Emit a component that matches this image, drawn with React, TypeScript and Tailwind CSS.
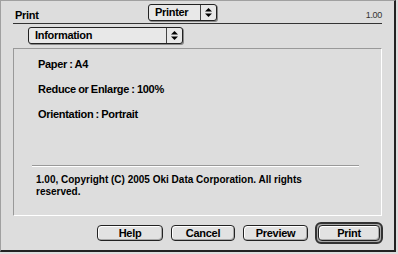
import React from "react";

const font = { fontFamily: '"Liberation Sans", Arial, sans-serif' };

function Arrows() {
  return (
    <svg width="7" height="9" viewBox="0 0 7 9" className="block">
      <path d="M3.5 0 L7 3.5 L0 3.5 Z" fill="#000" />
      <path d="M0 5.5 L7 5.5 L3.5 9 Z" fill="#000" />
    </svg>
  );
}

function Popup({ label, width }: { label: string; width: string }) {
  return (
    <div className={`flex h-[17px] ${width} rounded-[3px] border border-[#222] bg-[#e8e8e8] shadow-[1px_1px_0_#8a8a8a]`}>
      <div className="flex flex-1 items-center pl-[6px] text-[11px] font-bold tracking-[-0.3px] text-black">{label}</div>
      <div className="flex w-[16px] items-center justify-center border-l border-[#444]">
        <Arrows />
      </div>
    </div>
  );
}

const btnInner =
  "flex h-[16px] items-center justify-center rounded-[4px] border border-[#222] bg-[#e2e2e2] text-[11px] font-bold tracking-[-0.3px] text-black shadow-[inset_1px_1px_0_#fff,inset_-1px_-1px_0_#a8a8a8]";

function Btn({ label, w }: { label: string; w: string }) {
  return <div className={`${btnInner} ${w}`}>{label}</div>;
}

export default function App() {
  return (
    <div className="h-[254px] w-[398px] bg-[#dddddd] pr-[2px] pb-[2px]" style={font}>
      <div className="flex h-full flex-col border-l border-t border-[#a0a0a0] border-r-2 border-b-2 border-r-[#222] border-b-[#222]">
        <div className="mx-[12px] flex h-[23px] shrink-0 items-end border-b border-[#333]">
          <div className="w-[135px] pb-[1px] pl-[2px] text-[11px] font-bold leading-[13px] tracking-[-0.3px] text-black">
            Print
          </div>
          <div className="pb-[2px]">
            <Popup label="Printer" width="w-[69px]" />
          </div>
          <div className="flex-1 pb-[3px] text-right text-[9px] leading-[10px] tracking-[-0.3px] text-[#333]">1.00</div>
        </div>
        <div className="mt-[3px] shrink-0 pl-[27px]">
          <Popup label="Information" width="w-[155px]" />
        </div>
        <div className="mx-[12px] mt-[4px] flex h-[168px] shrink-0 flex-col border border-t-[#999] border-l-[#999] border-r-white border-b-white">
          <div className="mt-[9px] flex flex-col gap-[12px] pl-[24px] text-[11px] font-bold leading-[13px] tracking-[-0.3px] text-black [word-spacing:-0.5px]">
            <div>Paper : A4</div>
            <div>Reduce or Enlarge : 100%</div>
            <div>Orientation : Portrait</div>
          </div>
          <div className="mt-[44px] pl-[18px] pr-[22px]">
            <div className="border-t border-[#999] border-b border-b-white" />
            <div className="mt-[7px] w-[285px] pl-[4px] text-[10px] font-bold leading-[12px] text-black">
              1.00, Copyright (C) 2005 Oki Data Corporation. All rights reserved.
            </div>
          </div>
        </div>
        <div className="mt-[6px] mr-[11px] flex shrink-0 items-center justify-end gap-[8px]">
          <Btn label="Help" w="w-[66px]" />
          <Btn label="Cancel" w="w-[64px]" />
          <Btn label="Preview" w="w-[65px]" />
          <div className="ml-[-1px] rounded-[6px] border-2 border-[#333] bg-[#a8a8a8] p-[1px]">
            <Btn label="Print" w="w-[62px]" />
          </div>
        </div>
      </div>
    </div>
  );
}
